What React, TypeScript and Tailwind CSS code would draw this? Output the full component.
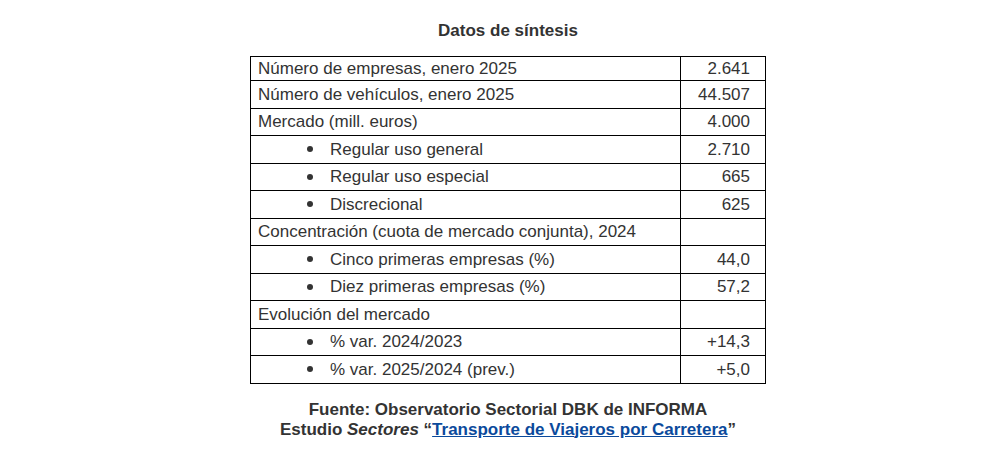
import React from 'react';

type Row = { label: string; value?: string; bullet?: boolean };

const rows: Row[] = [
  { label: 'Número de empresas, enero 2025', value: '2.641' },
  { label: 'Número de vehículos, enero 2025', value: '44.507' },
  { label: 'Mercado (mill. euros)', value: '4.000' },
  { label: 'Regular uso general', value: '2.710', bullet: true },
  { label: 'Regular uso especial', value: '665', bullet: true },
  { label: 'Discrecional', value: '625', bullet: true },
  { label: 'Concentración (cuota de mercado conjunta), 2024' },
  { label: 'Cinco primeras empresas (%)', value: '44,0', bullet: true },
  { label: 'Diez primeras empresas (%)', value: '57,2', bullet: true },
  { label: 'Evolución del mercado' },
  { label: '% var. 2024/2023', value: '+14,3', bullet: true },
  { label: '% var. 2025/2024 (prev.)', value: '+5,0', bullet: true },
];

export default function App() {
  return (
    <div className="w-[1000px] h-[454px] bg-white flex flex-col items-center pl-[16px] pt-[20px] font-['Liberation_Sans',Arial,sans-serif]">
      <h2 className="text-[17px] font-bold text-[#333] leading-[22px]">Datos de síntesis</h2>

      {/* Summary table */}
      <table className="mt-[14px] w-[516px] border-collapse text-[17px] text-[#333] leading-[19px]">
        <tbody>
          {rows.map((r, i) => (
            <tr key={i} className={i === 0 ? 'h-[24px]' : 'h-[27.5px]'}>
              <td className="w-[430px] border border-black px-[7px] align-middle">
                {r.bullet ? (
                  <span className="flex items-center">
                    <span className="ml-[49px] mr-[17px] w-[6px] h-[6px] rounded-full bg-[#333]" />
                    <span>{r.label}</span>
                  </span>
                ) : (
                  r.label
                )}
              </td>
              <td className="border border-black pr-[15px] text-right align-middle">{r.value}</td>
            </tr>
          ))}
        </tbody>
      </table>

      {/* Source */}
      <div className="mt-[16px] text-center text-[17px] font-bold text-[#333] leading-[20px]">
        <p>Fuente: Observatorio Sectorial DBK de INFORMA</p>
        <p>
          Estudio <i>Sectores</i> “
          <a href="#" className="text-[#0b4a9c] underline">Transporte de Viajeros por Carretera</a>”
        </p>
      </div>
    </div>
  );
}
